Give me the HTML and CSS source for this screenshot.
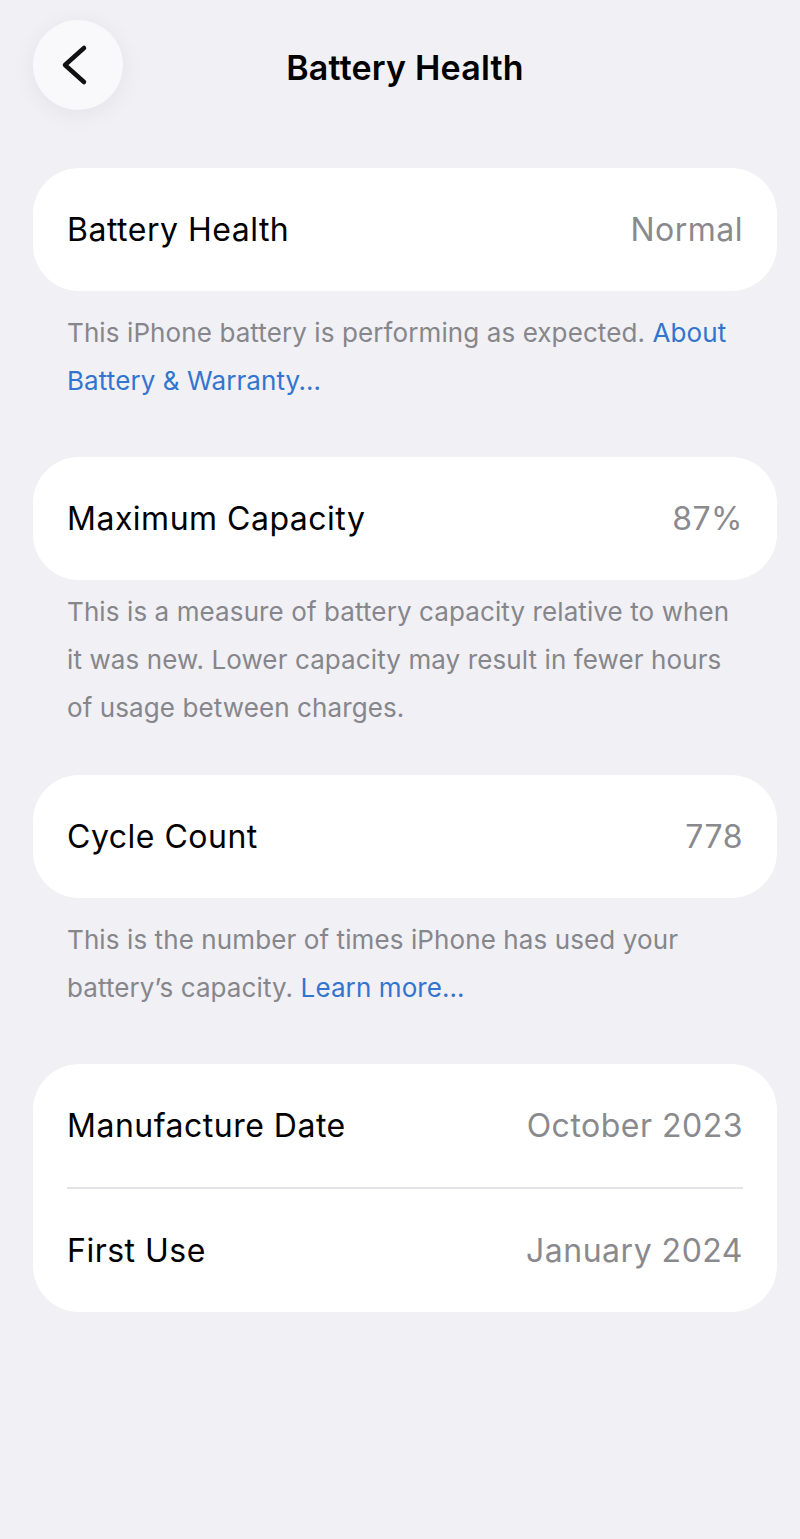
FILE: index.html
```html
<!DOCTYPE html>
<html>
<head>
  <title>Battery Health</title>
  <meta name="viewport" content="width=device-width, initial-scale=1">
  <link rel="stylesheet" href="styles.css">
</head>
<body>
  <div class="page">
    <div class="header">
      <button class="back" aria-label="Back">
        <svg width="30" height="44" viewBox="0 0 30 44">
          <path d="M25 5 L6 22 L25 39" fill="none" stroke="#111" stroke-width="4.5" stroke-linecap="round" stroke-linejoin="round"/>
        </svg>
      </button>
      <h1 class="title">Battery Health</h1>
      <div></div>
    </div>

    <div class="card">
      <div class="row">
        <span class="label">Battery Health</span>
        <span class="value">Normal</span>
      </div>
    </div>
    <p class="footer">This iPhone battery is performing as expected. <a href="#">About Battery &amp; Warranty…</a></p>

    <div class="card">
      <div class="row">
        <span class="label">Maximum Capacity</span>
        <span class="value">87%</span>
      </div>
    </div>
    <p class="footer compact">This is a measure of battery capacity relative to when it was new. Lower capacity may result in fewer hours of usage between charges.</p>

    <div class="card">
      <div class="row">
        <span class="label">Cycle Count</span>
        <span class="value">778</span>
      </div>
    </div>
    <p class="footer">This is the number of times iPhone has used your battery’s capacity. <a href="#">Learn more…</a></p>

    <div class="card">
      <div class="row">
        <span class="label">Manufacture Date</span>
        <span class="value">October 2023</span>
      </div>
      <div class="divider"></div>
      <div class="row">
        <span class="label">First Use</span>
        <span class="value">January 2024</span>
      </div>
    </div>
  </div>
</body>
</html>
```

FILE: styles.css
```css
body {
  font-family: Inter, "Noto Sans", sans-serif;
  background-color: #f0f0f5;
  margin: 0;
  padding: 0;
}
.page {
  padding: 20px 23px 0 33px;
}
.header {
  display: grid;
  grid-template-columns: 90px 1fr 90px;
  align-items: center;
  height: 90px;
  margin-bottom: 58px;
}
.back {
  width: 90px;
  height: 90px;
  border-radius: 50%;
  border: none;
  background-color: #f9f9fb;
  box-shadow: 0px 4px 24px rgba(0,0,0,0.06);
  display: flex;
  align-items: center;
  justify-content: center;
  padding: 0 8px 0 0;
  cursor: pointer;
}
.title {
  margin: 4px 0 0 0;
  text-align: center;
  font-size: 34px;
  font-weight: 600;
  color: #000;
  letter-spacing: 0.2px;
}
.card {
  background-color: #fff;
  border-radius: 46px;
  padding: 0 34px;
}
.row {
  display: flex;
  justify-content: space-between;
  align-items: center;
  height: 123px;
  font-size: 32px;
  letter-spacing: 0.5px;
}
.label {
  color: #000;
}
.value {
  color: #8a8a8e;
}
.divider {
  height: 2px;
  background-color: #e3e3e8;
}
.footer {
  margin: 0 0 52px 0;
  padding: 18px 34px 0 34px;
  font-size: 26px;
  line-height: 48px;
  letter-spacing: 0.1px;
  color: #86868b;
}
.footer.compact {
  padding-top: 8px;
  margin-bottom: 43px;
}
.footer a {
  color: #3275cf;
  text-decoration: none;
}
```
